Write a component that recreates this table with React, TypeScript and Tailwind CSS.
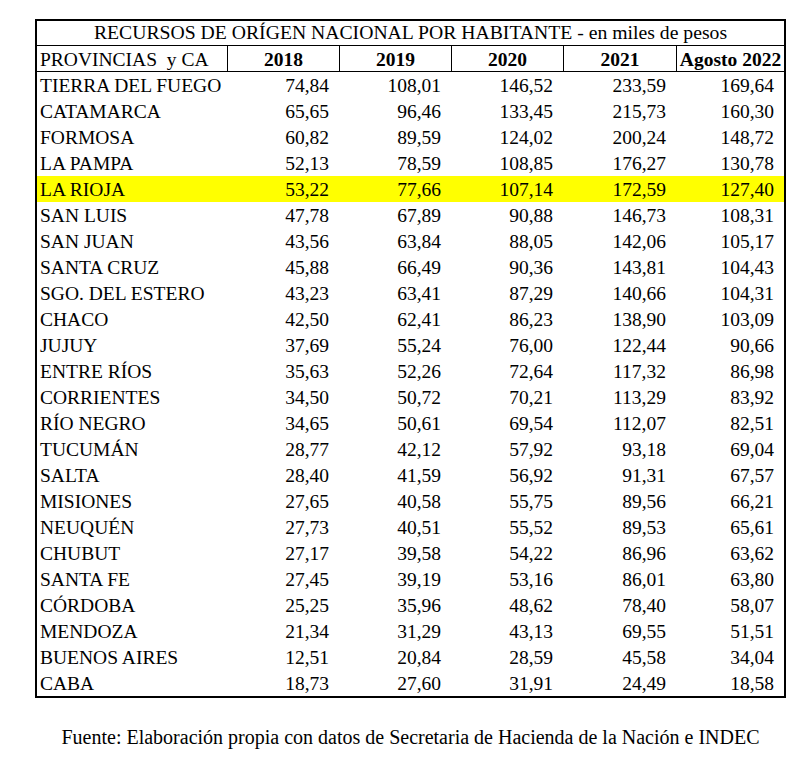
import React from 'react';

const rows: [string, string, string, string, string, string][] = [
  ['TIERRA DEL FUEGO', '74,84', '108,01', '146,52', '233,59', '169,64'],
  ['CATAMARCA', '65,65', '96,46', '133,45', '215,73', '160,30'],
  ['FORMOSA', '60,82', '89,59', '124,02', '200,24', '148,72'],
  ['LA PAMPA', '52,13', '78,59', '108,85', '176,27', '130,78'],
  ['LA RIOJA', '53,22', '77,66', '107,14', '172,59', '127,40'],
  ['SAN LUIS', '47,78', '67,89', '90,88', '146,73', '108,31'],
  ['SAN JUAN', '43,56', '63,84', '88,05', '142,06', '105,17'],
  ['SANTA CRUZ', '45,88', '66,49', '90,36', '143,81', '104,43'],
  ['SGO. DEL ESTERO', '43,23', '63,41', '87,29', '140,66', '104,31'],
  ['CHACO', '42,50', '62,41', '86,23', '138,90', '103,09'],
  ['JUJUY', '37,69', '55,24', '76,00', '122,44', '90,66'],
  ['ENTRE RÍOS', '35,63', '52,26', '72,64', '117,32', '86,98'],
  ['CORRIENTES', '34,50', '50,72', '70,21', '113,29', '83,92'],
  ['RÍO NEGRO', '34,65', '50,61', '69,54', '112,07', '82,51'],
  ['TUCUMÁN', '28,77', '42,12', '57,92', '93,18', '69,04'],
  ['SALTA', '28,40', '41,59', '56,92', '91,31', '67,57'],
  ['MISIONES', '27,65', '40,58', '55,75', '89,56', '66,21'],
  ['NEUQUÉN', '27,73', '40,51', '55,52', '89,53', '65,61'],
  ['CHUBUT', '27,17', '39,58', '54,22', '86,96', '63,62'],
  ['SANTA FE', '27,45', '39,19', '53,16', '86,01', '63,80'],
  ['CÓRDOBA', '25,25', '35,96', '48,62', '78,40', '58,07'],
  ['MENDOZA', '21,34', '31,29', '43,13', '69,55', '51,51'],
  ['BUENOS AIRES', '12,51', '20,84', '28,59', '45,58', '34,04'],
  ['CABA', '18,73', '27,60', '31,91', '24,49', '18,58'],
];

const years = ['2018', '2019', '2020', '2021', 'Agosto 2022'];

export default function App() {
  return (
    <div className="min-h-[766px] w-[808px] bg-white text-black font-[family-name:Liberation_Serif,serif] text-[19.5px]">
      <div className="pt-[19px] pl-[35px] w-[786px]">
        <div className="w-[751px] border-2 border-black">
          {/* Title */}
          <div className="h-[25px] flex items-center justify-center leading-none border-b border-black text-[19.7px]">
            RECURSOS DE ORÍGEN NACIONAL POR HABITANTE - en miles de pesos
          </div>

          {/* Header */}
          <div className="grid grid-cols-[190px_112px_112px_112px_113px_1fr] h-[26px] border-b border-black leading-none">
            <div className="flex items-center pl-[3px] pt-[2px] whitespace-pre">PROVINCIAS  y CA</div>
            {years.map((y) => (
              <div key={y} className="flex items-center justify-center pt-[2px] border-l border-black font-bold">
                {y}
              </div>
            ))}
          </div>

          {/* Rows */}
          {rows.map((r) => (
            <div
              key={r[0]}
              className={`grid grid-cols-[190px_112px_112px_112px_113px_1fr] h-[26px] leading-none ${
                r[0] === 'LA RIOJA' ? 'bg-[#ffff00]' : ''
              }`}
            >
              <div className="flex items-center pl-[3px] pt-[2px] whitespace-nowrap">{r[0]}</div>
              {r.slice(1).map((v, i) => (
                <div key={i} className="flex items-center justify-end pt-[2px] pr-[10px]">
                  {v}
                </div>
              ))}
            </div>
          ))}
        </div>

        <p className="mt-[29px] text-center text-[20px] leading-none">
          Fuente: Elaboración propia con datos de Secretaria de Hacienda de la Nación e INDEC
        </p>
      </div>
    </div>
  );
}
